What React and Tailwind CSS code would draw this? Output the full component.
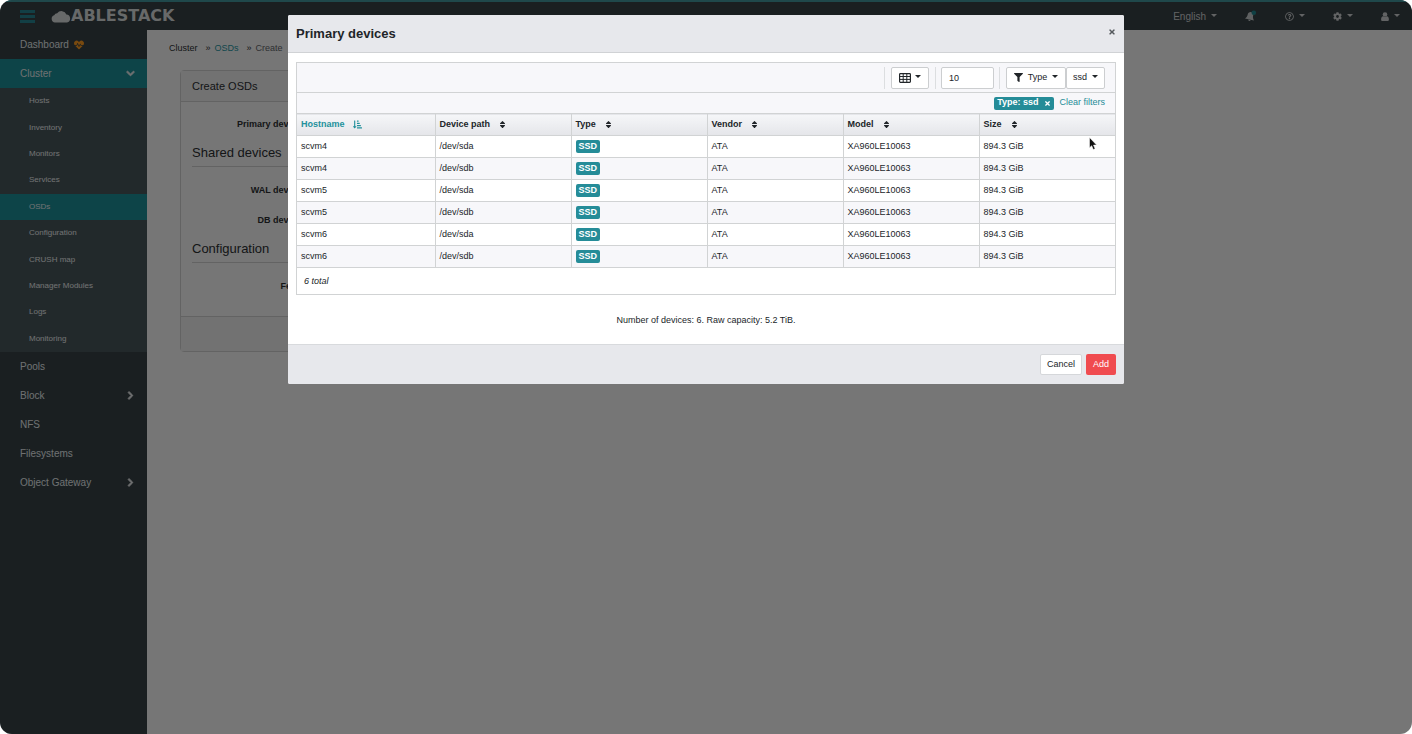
import React, { useState } from "react";
import {
  FaHeartbeat,
  FaChevronDown,
  FaChevronRight,
  FaRegQuestionCircle,
  FaCog,
  FaFilter,
  FaSort,
  FaSortAmountDownAlt,
  FaTimes,
} from "react-icons/fa";

const clusterItems = [
  "Hosts",
  "Inventory",
  "Monitors",
  "Services",
  "OSDs",
  "Configuration",
  "CRUSH map",
  "Manager Modules",
  "Logs",
  "Monitoring",
];

const mainItems = [
  { name: "Pools" },
  { name: "Block", nested: true },
  { name: "NFS" },
  { name: "Filesystems" },
  { name: "Object Gateway", nested: true },
];

const columns = ["Hostname", "Device path", "Type", "Vendor", "Model", "Size"];

const devices = ["scvm4", "scvm5", "scvm6"].flatMap((host) =>
  ["/dev/sda", "/dev/sdb"].map((path) => ({
    host,
    path,
    type: "SSD",
    vendor: "ATA",
    model: "XA960LE10063",
    size: "894.3 GiB",
  }))
);

function Caret() {
  return (
    <svg viewBox="0 0 6 3" className="mb-[2px] w-[6px] h-[3px]" fill="currentColor">
      <path d="M0 0h6L3 3z" />
    </svg>
  );
}

function GridIcon() {
  return (
    <svg
      viewBox="0 0 12 10"
      className="w-3 h-[10px]"
      fill="none"
      stroke="currentColor"
    >
      <rect x="0.6" y="0.6" width="10.8" height="8.8" rx="0.8" strokeWidth="1.2" />
      <path d="M0.5 3.5h11M0.5 6.4h11M4.2 0.5v9M7.8 0.5v9" />
    </svg>
  );
}

function BellIcon() {
  return (
    <svg viewBox="0 0 12 12" className="w-3 h-3">
      <g fill="#bfc3c5" transform="rotate(12 5 7)">
        <path d="M5 2C3.100 2.300 2.200 3.600 2.200 5.200 2.200 7.200 1.500 8.200.4 9.500h9.200C8.500 8.200 7.800 7.200 7.800 5.200 7.800 3.600 6.900 2.300 5 2z" />
        <path d="M3.900 9.900h2.300a1.150 1.150 0 0 1-2.300 0z" />
      </g>
      <circle cx="8.800" cy="2.700" r="2.300" fill="#1f8189" />
    </svg>
  );
}

function UserIcon() {
  return (
    <svg viewBox="0 0 8 9" className="h-[9px] w-2" fill="currentColor">
      <circle cx="4" cy="2.500" r="2.300" />
      <path d="M2.200 4.200c-1.500.2-2.100 1.500-2.100 3.200C.1 8.400.7 9 1.500 9h5c.8 0 1.400-.6 1.400-1.600 0-1.700-.6-3-2.100-3.200a2.900 2.900 0 0 1-3.600 0z" />
    </svg>
  );
}

function Logo() {
  return (
    <a href="#home" className="flex items-center text-[#cfd2d3]">
      <svg viewBox="0 0 20 13" className="w-5 h-[13px]" fill="currentColor">
        <path d="M4 12.500A3.700 3.700 0 0 1 3.200 5.300 3.600 3.600 0 0 1 6.200 3.200 5.300 5.300 0 0 1 15.400 4.600 4 4 0 0 1 16 12.500z" />
      </svg>
      <span className="font-['DejaVu_Sans',sans-serif] text-[16px] font-bold leading-none">
        ABLESTACK
      </span>
    </a>
  );
}

function NavBar() {
  return (
    <header className="flex h-[30px] items-center justify-between border-t-2 border-[#3f9097] bg-[#343e42] pl-5 pr-3 text-[10px] text-[#c4c7c9]">
      <div className="flex items-center gap-4">
        <button aria-label="Toggle navigation" className="flex flex-col gap-[2px]">
          <span className="h-[3px] w-[15px] bg-[#247f8b]" />
          <span className="h-[3px] w-[15px] bg-[#247f8b]" />
          <span className="h-[3px] w-[15px] bg-[#247f8b]" />
        </button>
        <Logo />
      </div>
      <div className="flex items-center gap-7">
        <button className="flex items-center gap-[5px]">
          English <Caret />
        </button>
        <button aria-label="Notifications">
          <BellIcon />
        </button>
        <button aria-label="Help" className="flex items-center gap-[5px]">
          <FaRegQuestionCircle size={9} /> <Caret />
        </button>
        <button aria-label="Settings" className="flex items-center gap-[5px]">
          <FaCog size={9} /> <Caret />
        </button>
        <button aria-label="Account" className="flex items-center gap-[5px]">
          <UserIcon /> <Caret />
        </button>
      </div>
    </header>
  );
}

function Sidebar() {
  return (
    <nav className="w-[147px] shrink-0 bg-[#343e42] text-[10px] text-[#dfe1e2]">
      <a href="#dashboard" className="flex h-[29px] items-center gap-[5px] pl-5">
        Dashboard <FaHeartbeat size={10} className="text-[#f0931e]" />
      </a>
      <a
        href="#cluster"
        className="flex h-[29px] items-center justify-between bg-[#1a8891] pl-5 pr-3"
      >
        Cluster{" "}
        <FaChevronDown size={9} stroke="currentColor" strokeWidth={50} />
      </a>
      <ul className="flex h-[264px] flex-col bg-[#445257] text-[8px] text-[#e2e4e5]">
        {clusterItems.map((item) => (
          <li
            key={item}
            className={`flex flex-1 items-center pl-[29px] ${
              item === "OSDs" ? "bg-[#1a8891]" : ""
            }`}
          >
            <a href="#cluster">{item}</a>
          </li>
        ))}
      </ul>
      {mainItems.map((item) => (
        <a
          key={item.name}
          href="#menu"
          className="flex h-[29px] items-center justify-between pl-5 pr-3"
        >
          {item.name}
          {item.nested && (
            <FaChevronRight size={9} stroke="currentColor" strokeWidth={50} />
          )}
        </a>
      ))}
    </nav>
  );
}

function FormRow({ label, help }) {
  return (
    <div className="flex h-[30px] items-center text-[9px] font-bold">
      <div className="flex w-[126px] items-center justify-end gap-1">
        {label}
        {help && <FaRegQuestionCircle size={8} />}
      </div>
    </div>
  );
}

function CreateForm() {
  return (
    <main className="flex-1 bg-[#ececec] pl-[22px] text-[#2a2d30]">
      <div className="flex h-[38px] items-center text-[9px]">
        <a href="#cluster">Cluster</a>
        <span className="ml-2 mr-1">»</span>
        <a href="#osds" className="text-[#1f8f9a]">
          OSDs
        </a>
        <span className="ml-2 mr-1">»</span>
        <span className="text-[#5c6165]">Create</span>
      </div>
      <section className="ml-[11px] mt-[2px] w-2/3 rounded-sm border border-[#c6c6c6]">
        <h2 className="flex h-[31px] items-center border-b border-[#c6c6c6] bg-[#e4e4e4] px-[11px] text-[11px]">
          Create OSDs
        </h2>
        <div className="px-[11px] pb-[14px] pt-2">
          <FormRow label="Primary devices" help />
          <h3 className="mb-[9px] flex h-[27px] items-center border-b border-[#c6c6c6] text-[13px]">
            Shared devices
          </h3>
          <FormRow label="WAL devices" help />
          <FormRow label="DB devices" help />
          <h3 className="mb-[9px] flex h-[27px] items-center border-b border-[#c6c6c6] text-[13px]">
            Configuration
          </h3>
          <FormRow label="Features" />
        </div>
        <div className="h-[35px] border-t border-[#c6c6c6] bg-[#e4e4e4]" />
      </section>
    </main>
  );
}

function DeviceTable() {
  return (
    <table className="w-full table-fixed border-collapse text-left text-[9px]">
      <thead>
        <tr className="h-[22px] border-y border-[#d1d3d4] bg-linear-to-b from-[#f5f6f8] to-[#e5e6ea]">
          {columns.map((column, index) => (
            <th
              key={column}
              className="border-r border-[#d1d3d4] px-1 py-0 first:w-[138px] last:border-r-0"
            >
              <button
                className={`flex items-center gap-2 ${
                  index === 0 ? "text-[#23919c]" : ""
                }`}
              >
                {column}
                {index === 0 ? (
                  <FaSortAmountDownAlt size={9} />
                ) : (
                  <FaSort size={9} />
                )}
              </button>
            </th>
          ))}
        </tr>
      </thead>
      <tbody>
        {devices.map((device) => (
          <tr
            key={device.host + device.path}
            className="h-[22px] border-b border-[#d1d3d4] even:bg-[#f7f7fa] [&>td]:border-r [&>td]:border-[#d1d3d4] [&>td]:px-1 [&>td]:py-0 [&>td:last-child]:border-r-0"
          >
            <td>{device.host}</td>
            <td>{device.path}</td>
            <td>
              <span className="inline-block rounded-xs bg-[#258c98] px-[3px] align-middle text-[9px] font-bold leading-[13px] text-white">
                {device.type}
              </span>
            </td>
            <td>{device.vendor}</td>
            <td>{device.model}</td>
            <td>{device.size}</td>
          </tr>
        ))}
      </tbody>
    </table>
  );
}

function Toolbar({ limit, setLimit }) {
  const button =
    "flex h-[22px] items-center justify-center rounded-xs border border-[#ccced0] bg-white";

  return (
    <div className="flex h-[29px] items-center justify-end pr-[10px] text-[9px]">
      <div className="border-l border-[#dcdee0] px-[6px]">
        <button aria-label="Columns" className={`${button} w-[38px] gap-1`}>
          <GridIcon /> <Caret />
        </button>
      </div>
      <div className="border-l border-[#dcdee0] px-[5px]">
        <input
          aria-label="Rows per page"
          value={limit}
          onChange={(e) => setLimit(e.target.value)}
          className="block h-[22px] w-[53px] rounded-xs border border-[#ccced0] bg-white px-[7px]"
        />
      </div>
      <div className="flex border-l border-[#dcdee0] pl-[6px]">
        <button className={`${button} w-[60px] gap-[5px]`}>
          <FaFilter size={9} /> Type <Caret />
        </button>
        <button className={`${button} w-[39px] gap-[5px]`}>
          ssd <Caret />
        </button>
      </div>
    </div>
  );
}

function DevicesModal() {
  const [limit, setLimit] = useState("10");

  return (
    <div
      role="dialog"
      aria-labelledby="devices-title"
      className="relative mx-auto mt-[15px] w-full max-w-[836px] overflow-hidden rounded-xs bg-white text-[9px] text-[#212529]"
    >
      <div className="flex h-[38px] items-center justify-between border-b border-[#d0d2d5] bg-[#e7e8ec] px-2">
        <h1 id="devices-title" className="text-[13px] font-bold">
          Primary devices
        </h1>
        <button aria-label="Close" className="mb-1 text-[#55595d]">
          <FaTimes size={8} />
        </button>
      </div>
      <div className="px-2 pb-[17px] pt-[9px]">
        <div className="border border-[#d1d3d4]">
          <div className="bg-[#f7f7fa]">
            <Toolbar limit={limit} setLimit={setLimit} />
            <div className="flex h-[21px] items-center justify-end gap-[5px] border-t border-[#d1d3d4] pr-[10px]">
              <span className="flex h-[13px] items-center gap-[6px] rounded-xs bg-[#258c98] px-[3px] font-bold text-white">
                Type: ssd
                <button aria-label="Remove filter">
                  <FaTimes size={7} />
                </button>
              </span>
              <a href="#clear" className="text-[#258c98]">
                Clear filters
              </a>
            </div>
          </div>
          <DeviceTable />
          <div className="flex h-[26px] items-center px-[7px] pt-[2px] italic">
            6 total
          </div>
        </div>
        <p className="mt-[18px] text-center leading-[14px]">
          Number of devices: 6. Raw capacity: 5.2 TiB.
        </p>
      </div>
      <div className="flex h-10 items-center justify-end gap-1 border-t border-[#d8dadd] bg-[#e7e8ec] px-2">
        <button className="h-[21px] rounded-xs border border-[#d5d7da] bg-white px-[6px]">
          Cancel
        </button>
        <button className="h-[21px] rounded-xs bg-[#f04b4f] px-[7px] text-white">
          Add
        </button>
      </div>
      <svg
        viewBox="0 0 8 13"
        className="absolute right-[27px] top-[122px] h-[13px] w-2"
        fill="#111"
        stroke="#fff"
        strokeWidth="0.5"
      >
        <path d="M0.500 0.500v10.200l2.200-2 1.600 3.900 1.800-.8-1.600-3.700h3.100z" />
      </svg>
    </div>
  );
}

export default function App() {
  return (
    <div className="bg-white font-['Liberation_Sans',sans-serif]">
      <div className="relative flex min-h-screen flex-col overflow-hidden rounded-xl">
        <NavBar />
        <div className="flex flex-1">
          <Sidebar />
          <CreateForm />
        </div>
        <div className="absolute inset-0 bg-black/50">
          <DevicesModal />
        </div>
      </div>
    </div>
  );
}
